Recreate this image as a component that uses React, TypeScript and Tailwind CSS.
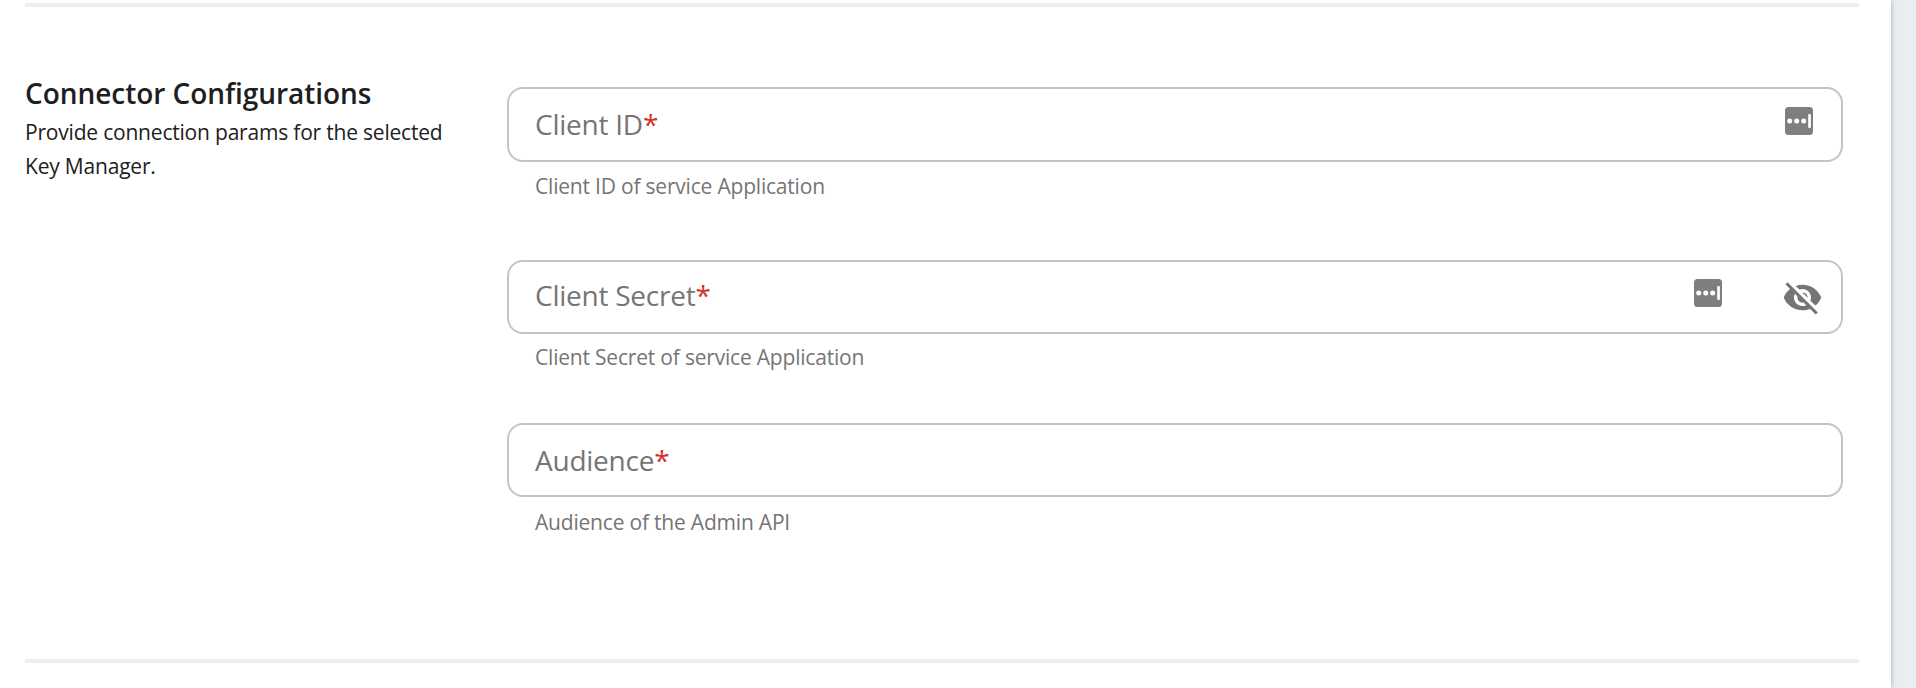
import type { ReactNode } from "react";

type FieldProps = {
  label: string;
  helper: string;
  boxClass: string;
  labelClass: string;
  helperClass: string;
  children?: ReactNode;
};

function AutofillIcon({ className }: { className: string }) {
  return (
    <svg className={className} width="28" height="28" viewBox="0 0 28 28">
      <rect width="28" height="28" rx="3.5" fill="#7f7f7f" />
      <circle cx="4.7" cy="14" r="2.5" fill="#fff" />
      <circle cx="11.7" cy="14" r="2.5" fill="#fff" />
      <circle cx="18.7" cy="14" r="2.5" fill="#fff" />
      <rect x="23.2" y="7" width="2.7" height="14" rx="1" fill="#fff" />
    </svg>
  );
}

function VisibilityOffIcon() {
  return (
    <svg className="ml-[60px] mt-[15px] h-[41px] w-[41px]" viewBox="0 0 24 24" fill="#757575">
      <path d="M12 7c2.76 0 5 2.24 5 5 0 .65-.13 1.26-.36 1.83l2.92 2.92c1.51-1.26 2.7-2.89 3.43-4.75-1.73-4.39-6-7.5-11-7.5-1.4 0-2.74.25-3.98.7l2.16 2.16C10.74 7.13 11.35 7 12 7zM2 4.27l2.28 2.28.46.46C3.08 8.3 1.78 10.02 1 12c1.73 4.39 6 7.5 11 7.5 1.55 0 3.03-.3 4.38-.84l.42.42L19.73 22 21 20.73 3.27 3 2 4.27zM7.53 9.8l1.55 1.55c-.05.21-.08.43-.08.65 0 1.66 1.34 3 3 3 .22 0 .44-.03.65-.08l1.55 1.55c-.67.33-1.41.53-2.2.53-2.76 0-5-2.24-5-5 0-.79.2-1.53.53-2.2zm4.31-.78l3.15 3.15.02-.16c0-1.66-1.34-3-3-3l-.17.01z" />
    </svg>
  );
}

function Field({ label, helper, boxClass, labelClass, helperClass, children }: FieldProps) {
  return (
    <div>
      <div className={`flex items-start rounded-[16px] border-2 border-[#c4c4c4] pl-[26px] ${boxClass}`}>
        <label className={`grow text-[28px] leading-[36px] tracking-[-0.24px] text-[#757575] ${labelClass}`}>
          {label}
          <span className="text-[#d32f2f]">*</span>
        </label>
        {children}
      </div>
      <p className={`pl-[28px] text-[21px] leading-[35px] tracking-[-0.2px] text-[#757575] ${helperClass}`}>{helper}</p>
    </div>
  );
}

export default function App() {
  return (
    <div className="flex h-[688px] w-full overflow-hidden bg-[#e8eef1] font-['Open_Sans',sans-serif]">
      <main className="flex h-[688px] w-[1891px] shrink-0 flex-col bg-white pl-[25px] pt-[3px] shadow-[0_0_5px_rgba(0,0,0,0.3)]">
        <hr className="h-[4px] w-[1834px] shrink-0 border-0 bg-[#eeeeee]" />
        <section className="flex h-[652px] shrink-0">
          <div className="w-[482px] shrink-0 pt-[65px] text-[#1d2021]">
            <h2 className="text-[28px] font-semibold leading-[42px] tracking-[-0.05px]">Connector Configurations</h2>
            <p className="mt-px w-[440px] text-[21px] leading-[34.3px] tracking-[-0.2px]">
              Provide connection params for the selected Key Manager.
            </p>
          </div>
          <div className="flex w-[1336px] flex-col pt-[80px]">
            <Field
              label="Client ID"
              helper="Client ID of service Application"
              boxClass="h-[75px]"
              labelClass="pt-[17px]"
              helperClass="mt-[7px]"
            >
              <AutofillIcon className="mr-[28px] mt-[18px]" />
            </Field>
            <div className="h-[56px]" />
            <Field
              label="Client Secret"
              helper="Client Secret of service Application"
              boxClass="h-[74px]"
              labelClass="pt-[15px]"
              helperClass="mt-[6px]"
            >
              <div className="mr-[18px] flex items-start">
                <AutofillIcon className="mt-[17px]" />
                <VisibilityOffIcon />
              </div>
            </Field>
            <div className="h-[48px]" />
            <Field
              label="Audience"
              helper="Audience of the Admin API"
              boxClass="h-[74px]"
              labelClass="pt-[17px]"
              helperClass="mt-[8px]"
            />
          </div>
        </section>
        <hr className="h-[4px] w-[1834px] shrink-0 border-0 bg-[#eeeeee]" />
      </main>
    </div>
  );
}
